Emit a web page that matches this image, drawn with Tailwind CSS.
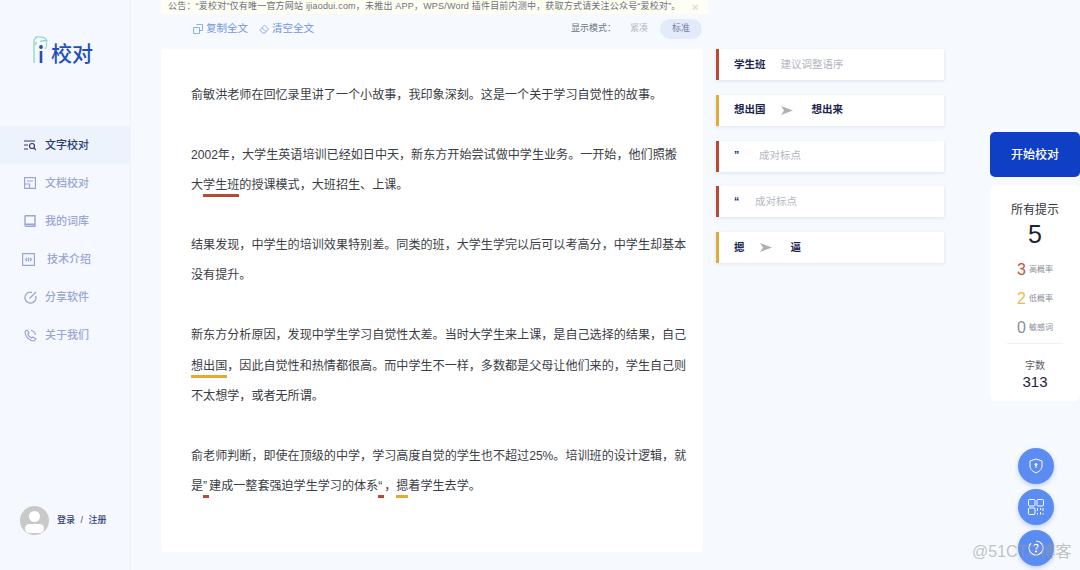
<!DOCTYPE html>
<html lang="zh-CN">
<head>
  <meta charset="UTF-8">
  <title>爱校对</title>
  <script src="https://cdn.jsdelivr.net/npm/@tailwindcss/browser@4"></script>
</head>
<body class="bg-[#f6f9fe] font-['Liberation_Sans','Noto_Sans_CJK_SC',sans-serif]">
  <div class="relative flex h-[570px] w-[1080px] overflow-hidden">

    <!-- sidebar -->
    <aside class="flex w-[131px] shrink-0 flex-col border-r border-[#eef2fa] bg-[#f5f8ff]">
      <div class="flex h-[126px] items-start pl-[32px] pt-[36px]">
        <svg class="h-[28px] w-[17px]" viewBox="0 0 17 28" fill="none">
          <path d="M2 27V6C2 3.500 3 2 5 1.500" stroke="#7fd6c4" stroke-width="1.200"/>
          <path d="M3 1h6c3 0 5 1.500 6 4-2-.5-4-.5-7 .5M5 6c-1 .5-1.500 1.500-1.500 3" stroke="#7fd6c4" stroke-width="1.200"/>
          <path d="M14 6c1 2 1 5-1 7" stroke="#7fd6c4" stroke-width="1"/>
          <circle cx="9" cy="11" r="1.900" fill="#1f4fb8"/>
          <path d="M9 15v12" stroke="#1f4fb8" stroke-width="2.600"/>
        </svg>
        <span class="ml-[2px] mt-[4px] text-[21px] leading-[28px] font-medium text-[#1f4fb8]">校对</span>
      </div>
      <nav class="flex flex-col text-[11px] font-medium text-[#9aa6d2]">
        <a class="flex h-[38px] items-center gap-[9px] bg-[#edf3fd] pl-[24px] text-[#2c3c6e]">
          <svg class="h-[12px] w-[12px]" viewBox="0 0 12 12" fill="none" stroke="#2c3c6e" stroke-width="1.200"><path d="M0 2h11M0 6h4M0 10h4"/><circle cx="8" cy="7" r="2.500"/><path d="M10 9l2 2"/></svg>
          文字校对
        </a>
        <a class="flex h-[38px] items-center gap-[9px] pl-[24px]">
          <svg class="h-[12px] w-[12px]" viewBox="0 0 12 12" fill="none" stroke="#9aa6d2" stroke-width="1.200"><path d="M.6.6h10.800v10.800H.6zM3 4h6M.6 7h5v4.400"/></svg>
          文档校对
        </a>
        <a class="flex h-[38px] items-center gap-[9px] pl-[24px]">
          <svg class="h-[12px] w-[12px]" viewBox="0 0 12 12" fill="none" stroke="#9aa6d2" stroke-width="1.400"><path d="M1 10V1.500C1 1 1.400.7 2 .7h9v10.600H2c-.6 0-1-.5-1-1.300zM1 9.300h10"/></svg>
          我的词库
        </a>
        <a class="flex h-[38px] items-center gap-[12px] pl-[22px]">
          <svg class="h-[13px] w-[13px]" viewBox="0 0 13 13" fill="none" stroke="#9aa6d2" stroke-width="1.200"><path d="M.6.6h11.800v11.800H.6z"/><path d="M5 5L3.500 6.500 5 8M8 5l1.500 1.500L8 8M6.500 4.500v4"/></svg>
          技术介绍
        </a>
        <a class="flex h-[38px] items-center gap-[8px] pl-[24px]">
          <svg class="h-[13px] w-[13px]" viewBox="0 0 13 13" fill="none" stroke="#9aa6d2" stroke-width="1.300"><path d="M8 1.300A5.500 5.500 0 1 0 11.700 5"/><path d="M5.500 7.500L12 1"/></svg>
          分享软件
        </a>
        <a class="flex h-[38px] items-center gap-[8px] pl-[24px]">
          <svg class="h-[13px] w-[13px]" viewBox="0 0 13 13" fill="none" stroke="#9aa6d2" stroke-width="1.200"><path d="M1 2.500L3 1l2 3-1.200 1.200c.7 1.700 2 3 3.800 3.800L8.800 8l3 2-1.500 2C5 12 1 7.500 1 2.500z"/><path d="M7 1.500c2.300.3 4 2 4.400 4.500"/></svg>
          关于我们
        </a>
      </nav>
      <div class="mt-auto mb-[35px] flex items-center gap-[8px] pl-[20px]">
        <span class="relative block h-[29px] w-[29px] overflow-hidden rounded-full bg-[#c9c9ca]">
          <span class="absolute left-[9px] top-[5px] h-[11px] w-[11px] rounded-full bg-white"></span>
          <span class="absolute left-[5px] top-[18px] h-[9px] w-[19px] rounded-full bg-white"></span>
        </span>
        <span class="text-[9px] font-medium text-[#33436f] [word-spacing:3px]">登录 / 注册</span>
      </div>
    </aside>

    <!-- editor -->
    <main class="ml-[30px] flex w-[542px] shrink-0 flex-col">
      <div class="flex h-[49px] items-center justify-between pt-[8px] pr-[1px]">
        <div class="flex items-center gap-[11px] pl-[32px] text-[10.500px] text-[#6f95dc]">
          <span class="flex items-center gap-[3px]">
            <svg class="h-[10px] w-[10px]" viewBox="0 0 10 10" fill="none" stroke="#8fb0e4"><path d="M3.500.5h6v6h-3M.5 3.500h6v6h-6z"/></svg>
            复制全文
          </span>
          <span class="flex items-center gap-[3px]">
            <svg class="h-[10px] w-[10px]" viewBox="0 0 10 10" fill="none" stroke="#8fb0e4"><path d="M5.500 1l4 4-3.500 4H3.500L.7 6zM3 4l4 3.500"/></svg>
            清空全文
          </span>
        </div>
        <div class="flex items-center text-[9px] text-[#6d7488]">
          <span>显示模式：</span>
          <span class="ml-[14px] text-[#b3bac8]">紧凑</span>
          <span class="ml-[12px] flex h-[20px] w-[42px] items-center justify-center rounded-full bg-[#e3ebfa] text-[#6d7fa3]">标准</span>
        </div>
      </div>
      <section class="h-[503px] rounded-[3px] bg-white pl-[30px] pr-[10px] pt-[31px] text-[12.080px] leading-[30.100px] text-[#3a3d44]">
        <p>俞敏洪老师在回忆录里讲了一个小故事，我印象深刻。这是一个关于学习自觉性的故事。</p>
        <p class="mt-[29.500px]">2002年，大学生英语培训已经如日中天，新东方开始尝试做中学生业务。一开始，他们照搬<br>大<span class="border-b-[3px] border-[#b84a32] pb-[2px]">学生班</span>的授课模式，大班招生、上课。</p>
        <p class="mt-[30px]">结果发现，中学生的培训效果特别差。同类的班，大学生学完以后可以考高分，中学生却基本<br>没有提升。</p>
        <p class="mt-[30.500px]">新东方分析原因，发现中学生学习自觉性太差。当时大学生来上课，是自己选择的结果，自己<br><span class="border-b-[3px] border-[#e0ab3a] pb-[2px]">想出国</span>，因此自觉性和热情都很高。而中学生不一样，多数都是父母让他们来的，学生自己则<br>不太想学，或者无所谓。</p>
        <p class="mt-[30px]">俞老师判断，即使在顶级的中学，学习高度自觉的学生也不超过25%。培训班的设计逻辑，就<br>是<span class="inline-block w-[6px] border-b-[3px] border-[#b84a32] leading-[18px]">”</span>建成一整套强迫学生学习的体系<span class="inline-block w-[6px] border-b-[3px] border-[#b84a32] leading-[18px]">“</span>，<span class="border-b-[3px] border-[#e0ab3a] pb-[2px]">摁</span>着学生去学。</p>
      </section>
    </main>

    <!-- suggestions -->
    <section class="ml-[13px] flex w-[228px] shrink-0 flex-col gap-[14.800px] pt-[49px] text-[10.500px]">
      <div class="flex h-[31px] items-center border-l-[3px] border-[#b84a32] bg-white pl-[15px] shadow-[0_1px_3px_rgba(150,165,200,0.25)]">
        <b class="font-bold text-[#1c2550]">学生班</b><span class="ml-[15px] text-[#b3b7bf]">建议调整语序</span>
      </div>
      <div class="flex h-[31px] items-center border-l-[3px] border-[#e0ab3a] bg-white pl-[15px] shadow-[0_1px_3px_rgba(150,165,200,0.25)]">
        <b class="font-bold text-[#1c2550]">想出国</b>
        <svg class="ml-[15px] h-[9px] w-[12px]" viewBox="0 0 12 9" fill="#aeb1b8"><path d="M0 0l12 4.500L0 9l3-4.500z"/></svg>
        <b class="ml-[19px] font-bold text-[#1c2550]">想出来</b>
      </div>
      <div class="flex h-[31px] items-center border-l-[3px] border-[#b84a32] bg-white pl-[15px] shadow-[0_1px_3px_rgba(150,165,200,0.25)]">
        <b class="w-[10px] font-bold text-[#1c2550]">”</b><span class="ml-[15px] text-[#b3b7bf]">成对标点</span>
      </div>
      <div class="flex h-[31px] items-center border-l-[3px] border-[#b84a32] bg-white pl-[15px] shadow-[0_1px_3px_rgba(150,165,200,0.25)]">
        <b class="w-[10px] font-bold text-[#1c2550]">“</b><span class="ml-[11px] text-[#b3b7bf]">成对标点</span>
      </div>
      <div class="flex h-[31px] items-center border-l-[3px] border-[#e0ab3a] bg-white pl-[15px] shadow-[0_1px_3px_rgba(150,165,200,0.25)]">
        <b class="font-bold text-[#1c2550]">摁</b>
        <svg class="ml-[15px] h-[9px] w-[12px]" viewBox="0 0 12 9" fill="#aeb1b8"><path d="M0 0l12 4.500L0 9l3-4.500z"/></svg>
        <b class="ml-[19px] font-bold text-[#1c2550]">逼</b>
      </div>
    </section>

    <!-- right rail -->
    <section class="ml-[46px] flex w-[90px] shrink-0 flex-col pt-[132px]">
      <button class="h-[45px] rounded-[5px] bg-[#0f3fc4] text-[12px] font-medium text-white">开始校对</button>
      <div class="mt-[8px] flex h-[216px] flex-col items-center rounded-[6px] bg-white pt-[17px] text-[#1e2433]">
        <span class="text-[12px] leading-[16px] text-[#30343f]">所有提示</span>
        <span class="text-[25px] leading-[33px]">5</span>
        <div class="mt-[4px] flex h-[29px] items-center gap-[3px] text-[8px] text-[#8a8d96]"><span class="text-[16px] text-[#c4553f]">3</span>高概率</div>
        <div class="flex h-[29px] items-center gap-[3px] text-[8px] text-[#8a8d96]"><span class="text-[16px] text-[#e8bd4c]">2</span>低概率</div>
        <div class="flex h-[29px] items-center gap-[3px] text-[8px] text-[#8a8d96]"><span class="text-[16px] text-[#8a8d96]">0</span>敏感词</div>
        <div class="mt-[1px] w-[56px] border-t border-[#eef0f4]"></div>
        <span class="mt-[15px] text-[10px] leading-[14px] text-[#5a5e68]">字数</span>
        <span class="text-[15px] leading-[17px]">313</span>
      </div>
    </section>

    <!-- announcement, lies over the toolbar -->
    <div class="absolute left-[161px] top-0 flex h-[14px] w-[547px] items-center bg-[#fffef4] pl-[7px] text-[9px] tracking-[0.200px] whitespace-nowrap text-[#6e7179]">
      公告：“爱校对”仅有唯一官方网站 ijiaodui.com，未推出 APP，WPS/Word 插件目前内测中，获取方式请关注公众号“爱校对”。
      <span class="absolute right-[9px] text-[10px] text-[#d8d8d8]">✕</span>
    </div>

    <!-- floating buttons -->
    <div class="absolute left-[1018px] top-[448px] flex flex-col gap-[5px]">
      <span class="flex h-[36px] w-[36px] items-center justify-center rounded-full bg-[#5b8cf2] shadow-[0_2px_4px_rgba(90,130,220,0.35)]">
        <svg class="h-[16px] w-[16px]" viewBox="0 0 16 16" fill="none" stroke="white" stroke-width="1"><path d="M8 1l6 2v5c0 3.500-3 5.500-6 7-3-1.500-6-3.500-6-7V3z"/><circle cx="8" cy="6.500" r="1" fill="white"/><path d="M8 7v3"/></svg>
      </span>
      <span class="flex h-[36px] w-[36px] items-center justify-center rounded-full bg-[#5b8cf2] shadow-[0_2px_4px_rgba(90,130,220,0.35)]">
        <svg class="h-[16px] w-[16px]" viewBox="0 0 16 16" fill="none" stroke="white" stroke-width="1"><rect x=".5" y=".5" width="6.500" height="6.500" rx="1"/><rect x="9" y=".5" width="6.500" height="6.500" rx="1"/><rect x=".5" y="9" width="6.500" height="6.500" rx="1"/><path d="M9.500 9v3M12.500 9v2M15 9v3M9.500 14v1.500M12.500 13v2.500M15 14v1.500"/></svg>
      </span>
      <span class="flex h-[36px] w-[36px] items-center justify-center rounded-full bg-[#5b8cf2] shadow-[0_2px_4px_rgba(90,130,220,0.35)]">
        <svg class="h-[16px] w-[16px]" viewBox="0 0 16 16" fill="none" stroke="white" stroke-width="1.200"><path d="M8 1a7 7 0 1 1-5 2.100"/><path d="M6 6.300C6 5 7 4.400 8 4.400s2 .7 2 1.800c0 1.500-2 1.500-2 3.200"/><circle cx="8" cy="11.500" r=".5"/></svg>
      </span>
    </div>

    <!-- watermark -->
    <span class="absolute left-[972px] top-[542px] text-[16px] leading-[20px] text-[#9a9a9a]/60">@51CTO博客</span>
  </div>
</body>
</html>
